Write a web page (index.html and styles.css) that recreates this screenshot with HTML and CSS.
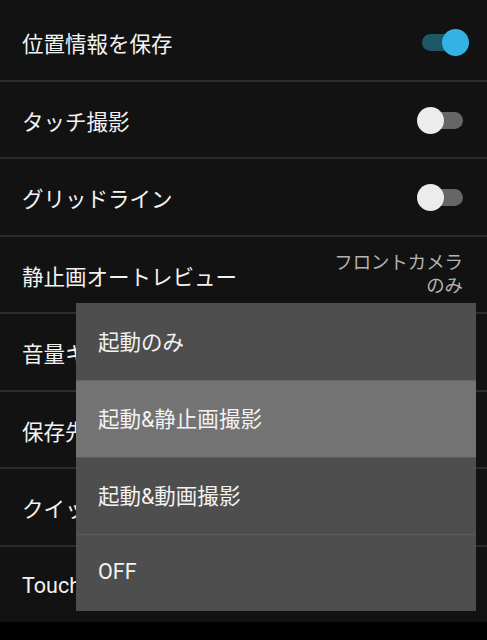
FILE: index.html
```html
<!DOCTYPE html>
<html lang="ja">
<head>
<meta charset="utf-8">
<link rel="stylesheet" href="styles.css">
</head>
<body>
<div class="screen">
  <ul class="list">
    <li class="row">
      <span class="label">位置情報を保存</span>
      <span class="switch on"><span class="track"></span><span class="thumb"></span></span>
    </li>
    <li class="row">
      <span class="label">タッチ撮影</span>
      <span class="switch"><span class="track"></span><span class="thumb"></span></span>
    </li>
    <li class="row">
      <span class="label">グリッドライン</span>
      <span class="switch"><span class="track"></span><span class="thumb"></span></span>
    </li>
    <li class="row">
      <span class="label">静止画オートレビュー</span>
      <span class="summary">フロントカメラ<br>のみ</span>
    </li>
    <li class="row">
      <span class="label">音量キーの動作</span>
    </li>
    <li class="row">
      <span class="label">保存先</span>
    </li>
    <li class="row">
      <span class="label">クイック起動</span>
    </li>
    <li class="row">
      <span class="label">Touch Block</span>
    </li>
  </ul>
  <ul class="menu">
    <li class="item">起動のみ</li>
    <li class="item selected">起動&amp;静止画撮影</li>
    <li class="item">起動&amp;動画撮影</li>
    <li class="item">OFF</li>
  </ul>
</div>
</body>
</html>
```

FILE: styles.css
```css
html, body {
  margin: 0;
  padding: 0;
  background: #000;
}
body {
  width: 487px;
  height: 640px;
  overflow: hidden;
  font-family: Roboto, "Noto Sans CJK JP", sans-serif;
  color: #f2f2f2;
}
.screen {
  position: relative;
  width: 487px;
  height: 640px;
}
.list {
  list-style: none;
  margin: 0;
  padding: 4px 0 0;
  background: #121212;
}
.row {
  height: 75.5px;
  display: flex;
  align-items: center;
  justify-content: space-between;
  padding: 0 24px 0 22px;
  border-bottom: 2px solid #2b2b2b;
}
.row:last-child {
  border-bottom: none;
}
.label {
  font-size: 21.5px;
  white-space: nowrap;
  margin-top: 2px;
}
.summary {
  font-size: 18.4px;
  line-height: 23px;
  color: #b4b4b4;
  text-align: right;
}
.switch {
  position: relative;
  width: 52px;
  height: 27px;
  margin-right: -6px;
  margin-top: 2px;
  flex: none;
}
.track {
  position: absolute;
  left: 5px;
  top: 5px;
  width: 41px;
  height: 17px;
  border-radius: 9px;
  background: #666;
}
.thumb {
  position: absolute;
  top: 0;
  left: 0;
  width: 27px;
  height: 27px;
  border-radius: 50%;
  background: #ececec;
}
.switch.on .track {
  background: #1c5866;
}
.switch.on .thumb {
  left: 25px;
  background: #33b3e3;
}
.menu {
  position: absolute;
  left: 76px;
  top: 303px;
  width: 400px;
  margin: 0;
  padding: 0;
  list-style: none;
  background: #4e4e4e;
}
.item {
  height: 77px;
  box-sizing: border-box;
  display: flex;
  align-items: center;
  padding: 0 0 3px 22px;
  font-size: 21.5px;
  color: #f2f2f2;
  background: #4e4e4e;
}
.item + .item {
  border-top: 1px solid #5c5c5c;
}
.item.selected {
  background: #737373;
  border-top-color: #676767;
}
```
